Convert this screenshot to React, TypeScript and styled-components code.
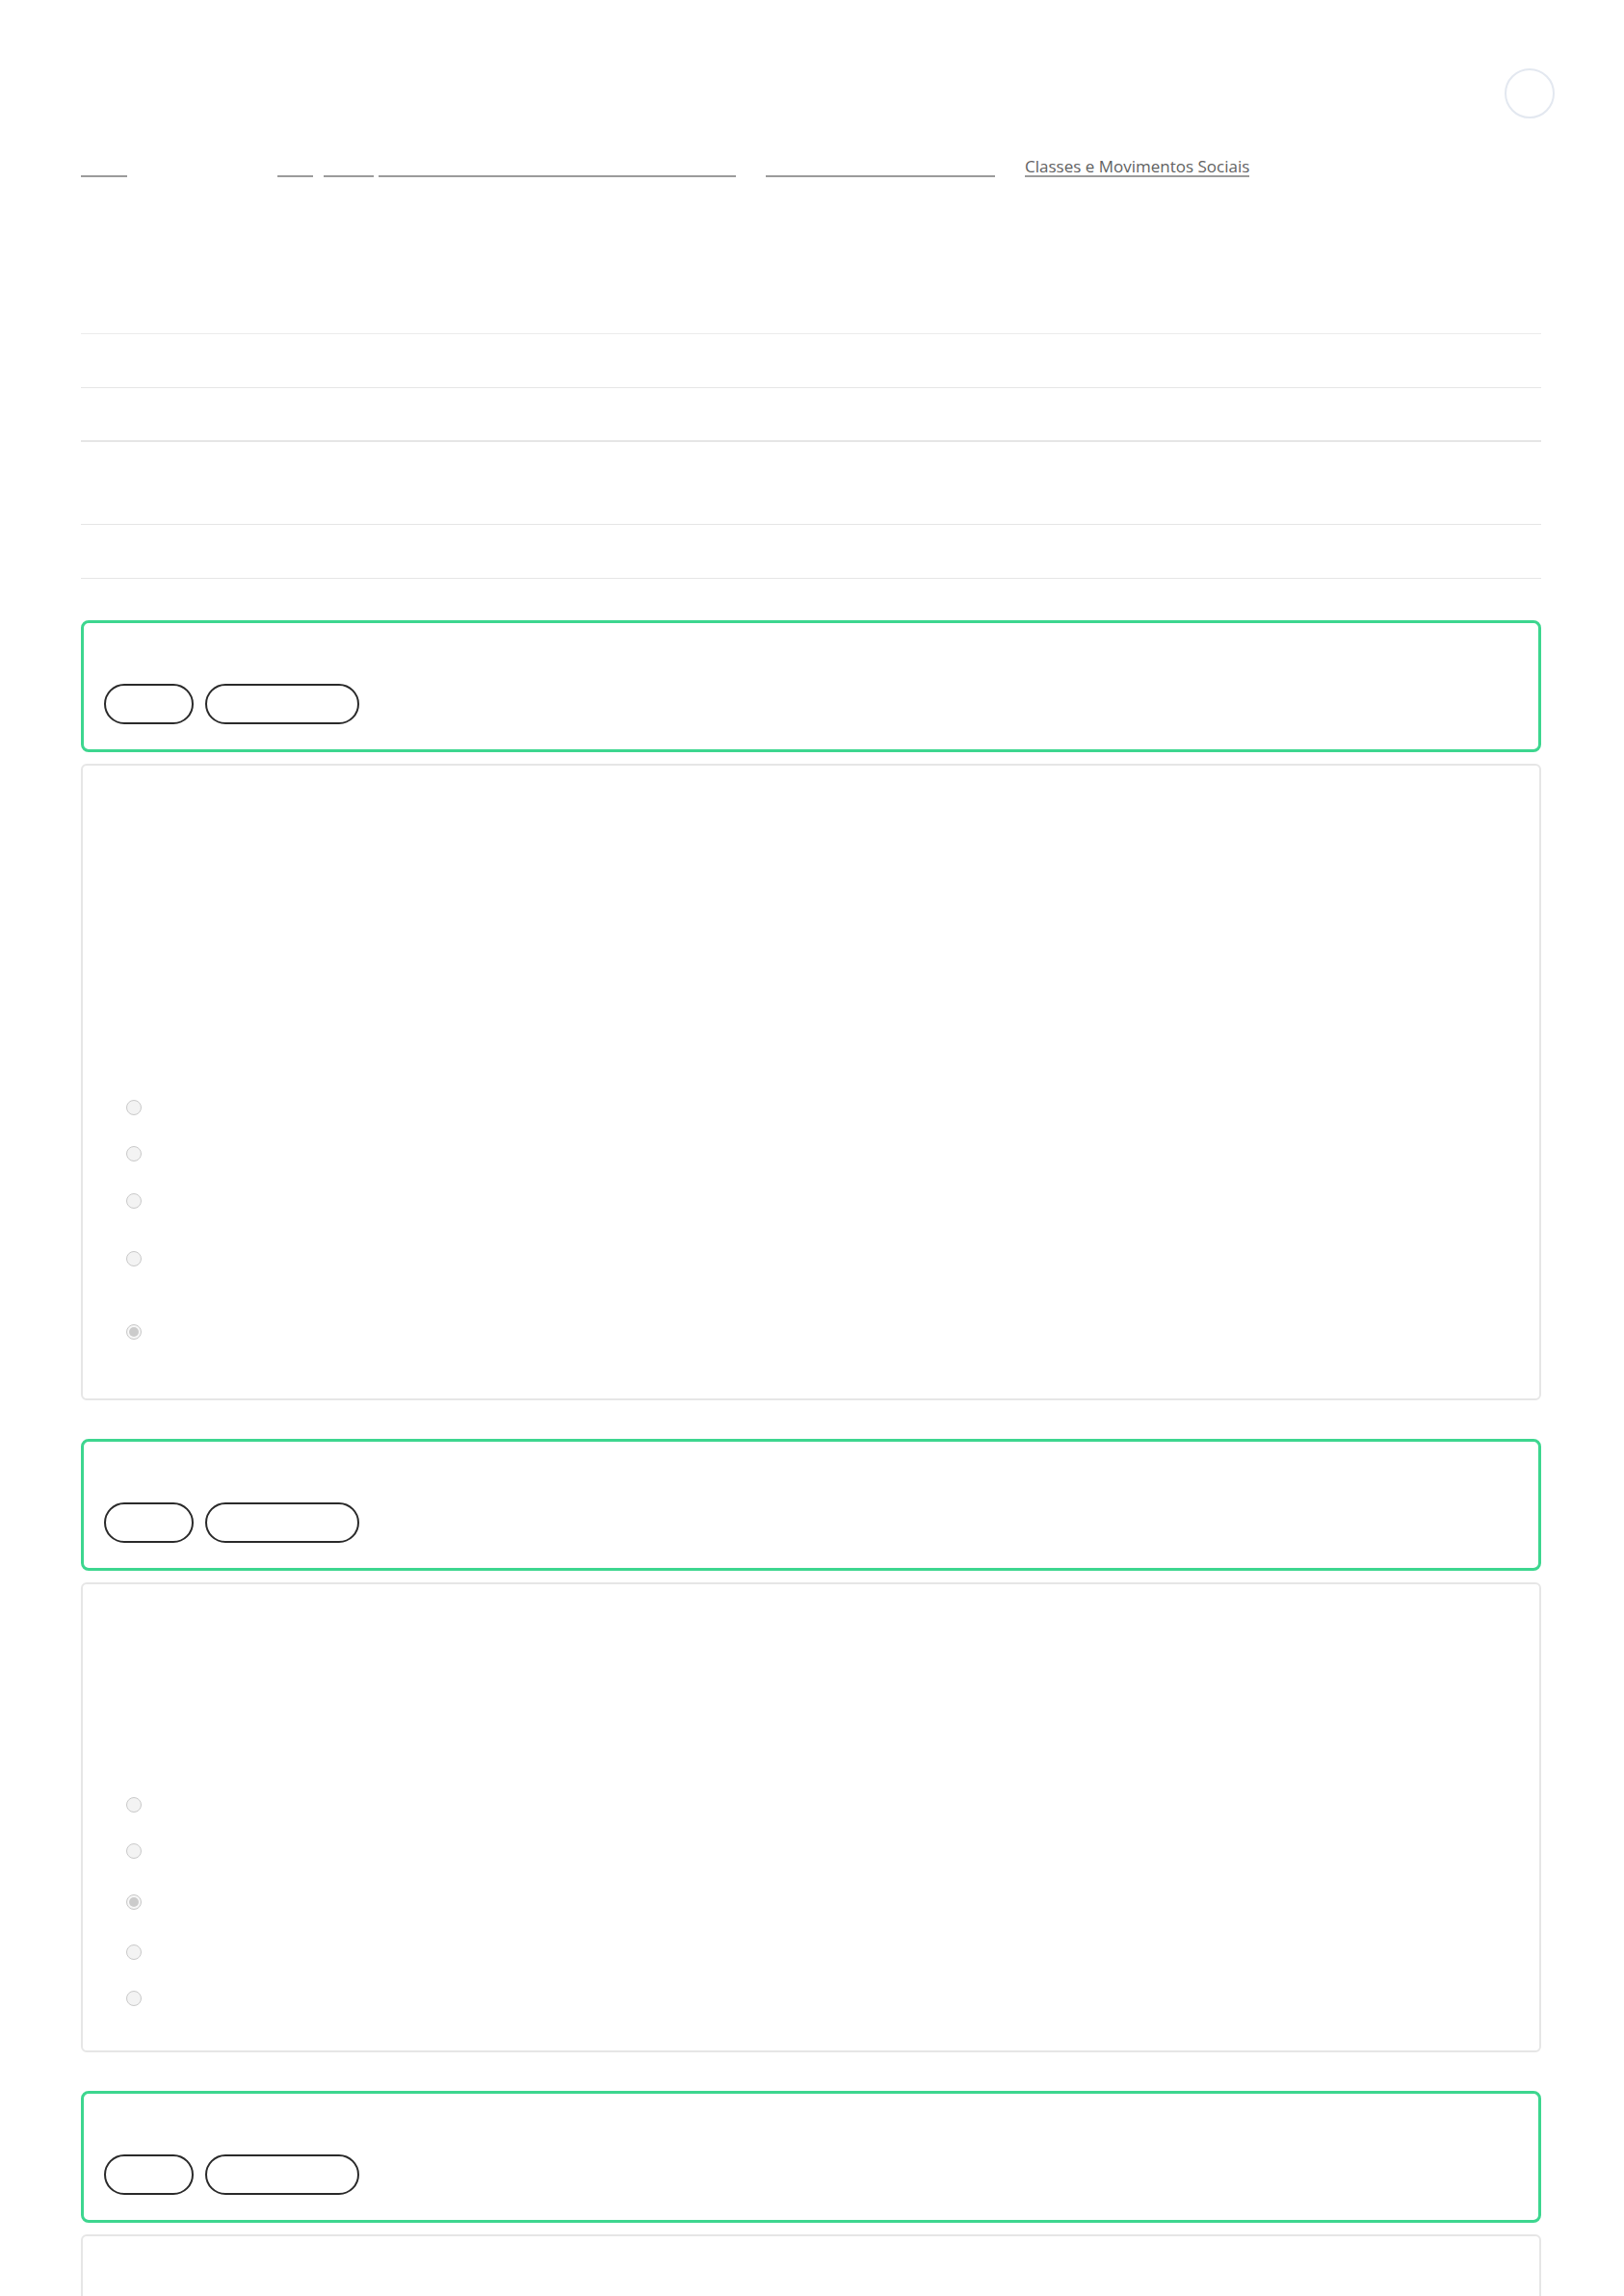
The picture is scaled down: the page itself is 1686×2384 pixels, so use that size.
import { FC } from 'react';
import styled, { createGlobalStyle } from 'styled-components';

const GlobalStyle = createGlobalStyle`
  html, body {
    margin: 0;
    padding: 0;
    background: #ffffff;
  }
  body {
    font-family: 'Open Sans', 'Noto Sans', sans-serif;
    color: #1f1f1f;
  }
`;

const Page = styled.div`
  height: 2384px;
  overflow: hidden;
  padding: 0 86px 0 84px;
  box-sizing: border-box;
`;

const TopBar = styled.header`
  display: flex;
  justify-content: flex-end;
  padding-top: 71px;
`;

const Avatar = styled.div`
  width: 52px;
  height: 52px;
  border-radius: 50%;
  border: 2px solid #e3e8f0;
  box-sizing: border-box;
  margin-right: -14px;
`;

const Crumbs = styled.nav`
  display: flex;
  align-items: flex-end;
  margin-top: 41px;
  height: 20px;
`;

const Crumb = styled.a<{ $w?: number; $gap: number }>`
  display: block;
  height: 18px;
  ${(p) => (p.$w ? `width: ${p.$w}px;` : '')}
  margin-left: ${(p) => p.$gap}px;
  border-bottom: 2px solid #9b9b9b;
  font-size: 17px;
  line-height: 17px;
  color: #626262;
  white-space: nowrap;
  text-decoration: none;
`;

const InfoList = styled.section`
  margin-top: 162px;
  border-top: 1px solid #ebebeb;
`;

const InfoRow = styled.div<{ $h: number; $thick?: boolean }>`
  height: ${(p) => p.$h}px;
  border-bottom: ${(p) => (p.$thick ? 2 : 1)}px solid #e6e6e6;
`;

const Questions = styled.div`
  margin-top: 43px;
  display: flex;
  flex-direction: column;
  gap: 40px;
`;

const Question = styled.article`
  display: flex;
  flex-direction: column;
  gap: 12px;
`;

const Header = styled.div`
  border: 3px solid #3dd68f;
  border-radius: 8px;
  padding: 63px 21px 26px;
  display: flex;
  gap: 12px;
`;

const Tag = styled.span<{ $w: number }>`
  display: block;
  width: ${(p) => p.$w}px;
  height: 42px;
  box-sizing: border-box;
  border: 2px solid #2a2a2a;
  border-radius: 21px;
`;

const Body = styled.div<{ $top: number; $bottom: number }>`
  border: 2px solid #e6e6e6;
  border-radius: 6px;
  padding: ${(p) => p.$top}px 45px ${(p) => p.$bottom}px;
`;

const Option = styled.label<{ $h: number }>`
  display: flex;
  align-items: flex-start;
  height: ${(p) => p.$h}px;
`;

const Radio = styled.span<{ $checked?: boolean }>`
  position: relative;
  width: 16px;
  height: 16px;
  box-sizing: border-box;
  border-radius: 50%;
  border: 1px solid #c9c9c9;
  background: #f3f3f3;
  &::after {
    content: '';
    display: ${(p) => (p.$checked ? 'block' : 'none')};
    position: absolute;
    inset: 2px;
    border-radius: 50%;
    background: #cbcbcb;
    box-shadow: 0 0 0 1px #fafafa;
  }
`;

interface iQuestion {
  top: number;
  bottom: number;
  options: number[];
  checked: number;
}

const questions: iQuestion[] = [
  { top: 347, bottom: 61, options: [48, 49, 60, 76, 16], checked: 4 },
  { top: 221, bottom: 46, options: [48, 53, 52, 48, 16], checked: 2 },
  { top: 200, bottom: 40, options: [48, 48, 48, 48, 16], checked: -1 },
];

const QuestionCard: FC<{ q: iQuestion }> = ({ q }) => (
  <Question>
    <Header>
      <Tag $w={93} />
      <Tag $w={160} />
    </Header>
    <Body $top={q.top} $bottom={q.bottom}>
      {q.options.map((h, i) => (
        <Option key={i} $h={h}>
          <Radio $checked={i === q.checked} />
        </Option>
      ))}
    </Body>
  </Question>
);

const App: FC = () => (
  <>
    <GlobalStyle />
    <Page>
      <TopBar>
        <Avatar />
      </TopBar>
      <Crumbs>
        <Crumb $w={48} $gap={0} />
        <Crumb $w={37} $gap={156} />
        <Crumb $w={52} $gap={11} />
        <Crumb $w={371} $gap={5} />
        <Crumb $w={238} $gap={31} />
        <Crumb $gap={31} href="#">
          Classes e Movimentos Sociais
        </Crumb>
      </Crumbs>
      <InfoList>
        <InfoRow $h={55} />
        <InfoRow $h={54} $thick />
        <InfoRow $h={85} />
        <InfoRow $h={55} />
      </InfoList>
      <Questions>
        {questions.map((q, i) => (
          <QuestionCard key={i} q={q} />
        ))}
      </Questions>
    </Page>
  </>
);

export default App;
